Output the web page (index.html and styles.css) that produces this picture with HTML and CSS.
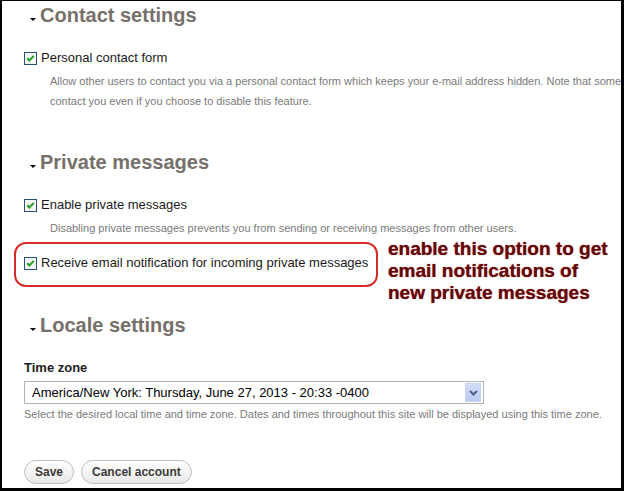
FILE: index.html
```html
<!DOCTYPE html>
<html lang="en">
<head>
    <meta charset="UTF-8">
    <meta name="viewport" content="width=device-width, initial-scale=1.0">
    <title>Account settings</title>
    <link rel="stylesheet" href="styles.css">
</head>
<body>

<div class="frame">

    <section class="fieldset">
        <h2 class="legend"><span class="arrow"></span>Contact settings</h2>
        <div class="form-checkbox">
            <svg class="check" width="13" height="13" viewBox="0 0 13 13"><rect x="0.5" y="0.5" width="12" height="12" fill="#f5f5f1" stroke="#27527c"/><path d="M3.2 6.2l2.2 2.3 4.4-4.6" stroke="#23a023" stroke-width="2" fill="none"/></svg>
            <span>Personal contact form</span>
        </div>
        <div class="description indented">Allow other users to contact you via a personal contact form which keeps your e-mail address hidden. Note that some privileged users such as site administrators are still able to<br>contact you even if you choose to disable this feature.</div>
    </section>

    <section class="fieldset next">
        <h2 class="legend"><span class="arrow"></span>Private messages</h2>
        <div class="form-checkbox">
            <svg class="check" width="13" height="13" viewBox="0 0 13 13"><rect x="0.5" y="0.5" width="12" height="12" fill="#f5f5f1" stroke="#27527c"/><path d="M3.2 6.2l2.2 2.3 4.4-4.6" stroke="#23a023" stroke-width="2" fill="none"/></svg>
            <span>Enable private messages</span>
        </div>
        <div class="description indented">Disabling private messages prevents you from sending or receiving messages from other users.</div>
        <div class="form-checkbox notify">
            <svg class="check" width="13" height="13" viewBox="0 0 13 13"><rect x="0.5" y="0.5" width="12" height="12" fill="#f5f5f1" stroke="#27527c"/><path d="M3.2 6.2l2.2 2.3 4.4-4.6" stroke="#23a023" stroke-width="2" fill="none"/></svg>
            <span>Receive email notification for incoming private messages</span>
            <div class="highlight"></div>
            <div class="callout">enable this option to get<br>email notifications of<br>new private messages</div>
        </div>
    </section>

    <section class="fieldset last">
        <h2 class="legend"><span class="arrow"></span>Locale settings</h2>
        <label class="field-label">Time zone</label>
        <div class="select">
            <span>America/New York: Thursday, June 27, 2013 - 20:33 -0400</span>
            <span class="select-btn">
                <svg width="9" height="6" viewBox="0 0 9 6"><path d="M1 1l3.5 3.5L8 1" stroke="#4a5f86" stroke-width="2" fill="none"/></svg>
            </span>
        </div>
        <div class="description tight">Select the desired local time and time zone. Dates and times throughout this site will be displayed using this time zone.</div>
    </section>

    <div class="actions">
        <button class="btn">Save</button>
        <button class="btn">Cancel account</button>
    </div>

</div>

</body>
</html>
```

FILE: styles.css
```css
* {
    margin: 0;
    padding: 0;
    box-sizing: border-box;
}

body {
    font-family: 'Liberation Sans', Arial, sans-serif;
    background: #000;
}

.frame {
    width: 624px;
    height: 491px;
    background: #fff;
    border-style: solid;
    border-color: #000;
    border-width: 1px 3px 3px 2px;
    padding: 2px 0 0 22px;
    overflow: hidden;
}

.legend {
    display: flex;
    align-items: center;
    font-size: 20px;
    line-height: 24px;
    font-weight: bold;
    color: #76706a;
    margin-left: 6px;
}

.arrow {
    width: 0;
    height: 0;
    border-left: 3px solid transparent;
    border-right: 3px solid transparent;
    border-top: 3px solid #000;
    margin: 8px 4px 0 0;
}

.next {
    margin-top: 39px;
}

.last {
    margin-top: 41px;
}

.form-checkbox {
    display: flex;
    align-items: center;
    gap: 4px;
    margin-top: 22px;
    font-size: 13px;
    line-height: 18px;
    color: #1a1a1a;
}

.check {
    display: block;
    flex-shrink: 0;
}

.description {
    font-size: 11px;
    line-height: 20px;
    color: #7a7a7a;
    margin-top: 4px;
    white-space: nowrap;
}

.indented {
    padding-left: 26px;
}

.description.tight {
    line-height: 18px;
    margin-top: 1px;
}

.notify {
    position: relative;
    margin-top: 16px;
}

.highlight {
    position: absolute;
    left: -10px;
    top: -12px;
    width: 364px;
    height: 45px;
    border: 2px solid #d62b2b;
    border-radius: 12px;
}

.callout {
    position: absolute;
    left: 364px;
    top: -16px;
    font-size: 19px;
    line-height: 22px;
    font-weight: bold;
    color: #600a0c;
    text-shadow: 0 0 1px #b52025;
    white-space: nowrap;
}

.field-label {
    display: block;
    margin-top: 23px;
    font-size: 13px;
    line-height: 16px;
    font-weight: bold;
    color: #1e1e1e;
}

.select {
    display: flex;
    align-items: center;
    justify-content: space-between;
    width: 460px;
    height: 23px;
    margin-top: 5px;
    padding: 0 2px 0 7px;
    border: 1px solid #b4b4b4;
    font-size: 13px;
    color: #000;
}

.select-btn {
    display: flex;
    align-items: center;
    justify-content: center;
    width: 16px;
    height: 19px;
    background: linear-gradient(#d2ddf8, #bccbf2);
    border: 1px solid #c6d3f3;
}

.select-btn svg {
    display: block;
}

.actions {
    display: flex;
    gap: 7px;
    margin-top: 37px;
}

.btn {
    height: 24px;
    padding: 0 10px;
    font-family: 'Liberation Sans', Arial, sans-serif;
    font-size: 12px;
    font-weight: bold;
    color: #3b3b3b;
    background: linear-gradient(#ffffff, #e9e9e9);
    border: 1px solid #bdbdbd;
    border-radius: 12px;
}
```
